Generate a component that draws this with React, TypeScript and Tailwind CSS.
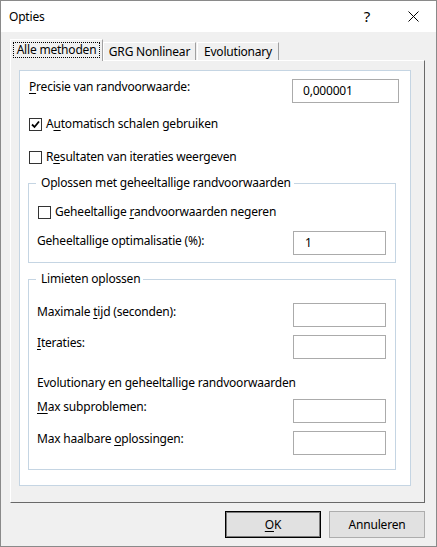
const field = "w-[93px] h-[24px] border border-[#ababab] bg-white";

function Check({ checked }: { checked?: boolean }) {
  return (
    <span className="w-[13px] h-[13px] border border-[#333333] bg-white flex items-center justify-center shrink-0">
      {checked && (
        <svg width="9" height="9" viewBox="0 0 9 9">
          <path d="M1 4.5 L3.5 7 L8 1.5" fill="none" stroke="#000" strokeWidth="1.8" />
        </svg>
      )}
    </span>
  );
}

function Row({ label, value, mt }: { label: React.ReactNode; value?: string; mt: string }) {
  return (
    <div className={`flex items-start justify-between pl-[8px] pr-[9px] ${mt}`}>
      <span className="leading-[16px]">{label}</span>
      <div className={`${field} pl-[11px] leading-[22px]`}>{value}</div>
    </div>
  );
}

export default function App() {
  return (
    <div className="w-[437px] h-[547px] border border-[#8a8a8a] bg-[#f0f0f0] flex flex-col text-[12px] tracking-[-0.2px] text-black font-['Noto_Sans',sans-serif]">
      {/* Titelbalk */}
      <div className="h-[31px] bg-white flex items-center shrink-0">
        <span className="pl-[8px] flex-1">Opties</span>
        <span className="w-[46px] text-center text-[15px]">?</span>
        <span className="w-[46px] flex justify-center">
          <svg width="11" height="11" viewBox="0 0 11 11">
            <path d="M0.5 0.5 L10.5 10.5 M10.5 0.5 L0.5 10.5" stroke="#000" strokeWidth="1" />
          </svg>
        </span>
      </div>

      {/* Tabs */}
      <div className="flex items-end pl-[9px] mt-[7px] h-[22px] -mb-px relative z-10">
        <div className="w-[93px] h-[22px] border-t border-l border-white border-r border-r-[#a0a0a0] bg-[#f0f0f0] p-[2px] pb-[3px]">
          <div className="h-full border border-dotted border-black flex items-center justify-center leading-none">
            Alle methoden
          </div>
        </div>
        <div className="w-[93px] h-[18px] mb-px border-t border-l border-white border-r border-r-[#a0a0a0] flex items-center justify-center">
          GRG Nonlinear
        </div>
        <div className="w-[82px] h-[18px] mb-px ml-px border-t border-l border-white border-r border-r-[#a0a0a0] flex items-center justify-center">
          Evolutionary
        </div>
      </div>

      {/* Paneel */}
      <div className="ml-[9px] w-[415px] h-[443px] border-t border-l border-white border-r border-b border-r-[#696969] border-b-[#696969] pl-[8px] pt-[9px]">
        <div className="w-[392px] h-[416px] bg-white border border-[#c5d5e3]">
          <div className="flex items-start justify-between pl-[9px] pr-[11px] mt-[8px]">
            <span className="leading-[16px]">
              <u className="underline-offset-2">P</u>recisie van randvoorwaarde:
            </span>
            <div className="w-[107px] h-[24px] border border-[#ababab] pl-[10px] leading-[22px]">0,000001</div>
          </div>

          <div className="flex items-center gap-[4px] pl-[9px] mt-[13px] h-[16px]">
            <Check checked />
            <span>
              A<u className="underline-offset-2">u</u>tomatisch schalen gebruiken
            </span>
          </div>
          <div className="flex items-center gap-[4px] pl-[9px] mt-[17px] h-[16px]">
            <Check />
            <span>
              R<u className="underline-offset-2">e</u>sultaten van iteraties weergeven
            </span>
          </div>

          <fieldset className="ml-[8px] w-[368px] mt-[10px] border border-[#c5d5e3] pb-[7px]">
            <legend className="ml-[7px] pl-[5px] pr-[3px] leading-[16px]">
              Oplossen met geheeltallige randvoorwaarden
            </legend>
            <div className="flex items-center gap-[4px] pl-[9px] mt-[13px] h-[16px]">
              <Check />
              <span>
                Geheeltallige <u className="underline-offset-2">r</u>andvoorwaarden negeren
              </span>
            </div>
            <Row mt="mt-[11px]" label={<span className="block pt-[2px]">Geheeltallige optimalisatie (%):</span>} value="1" />
          </fieldset>

          <fieldset className="ml-[8px] w-[368px] mt-[8px] border border-[#c5d5e3] pb-[14px]">
            <legend className="ml-[7px] pl-[5px] pr-[3px] leading-[16px]">Limieten oplossen</legend>
            <Row
              mt="mt-[16px]"
              label={<span className="block pt-px">Maximale <u className="underline-offset-2">t</u>ijd (seconden):</span>}
            />
            <Row mt="mt-[8px]" label={<><u className="underline-offset-2">I</u>teraties:</>} />
            <div className="pl-[8px] mt-[16px] leading-[16px]">Evolutionary en geheeltallige randvoorwaarden</div>
            <Row mt="mt-[8px]" label={<><u className="underline-offset-2">M</u>ax subproblemen:</>} />
            <Row mt="mt-[8px]" label={<>Max haalbare <u className="underline-offset-2">o</u>plossingen:</>} />
          </fieldset>
        </div>
      </div>

      {/* Knoppen */}
      <div className="flex justify-end gap-[8px] pr-[11px] mt-[8px]">
        <button className="w-[96px] h-[27px] bg-[#e1e1e1] border border-black shadow-[inset_0_0_0_1px_#7a7a7a]">
          <u className="underline-offset-2">O</u>K
        </button>
        <button className="w-[96px] h-[27px] bg-[#e1e1e1] border border-[#adadad]">Annuleren</button>
      </div>
    </div>
  );
}
